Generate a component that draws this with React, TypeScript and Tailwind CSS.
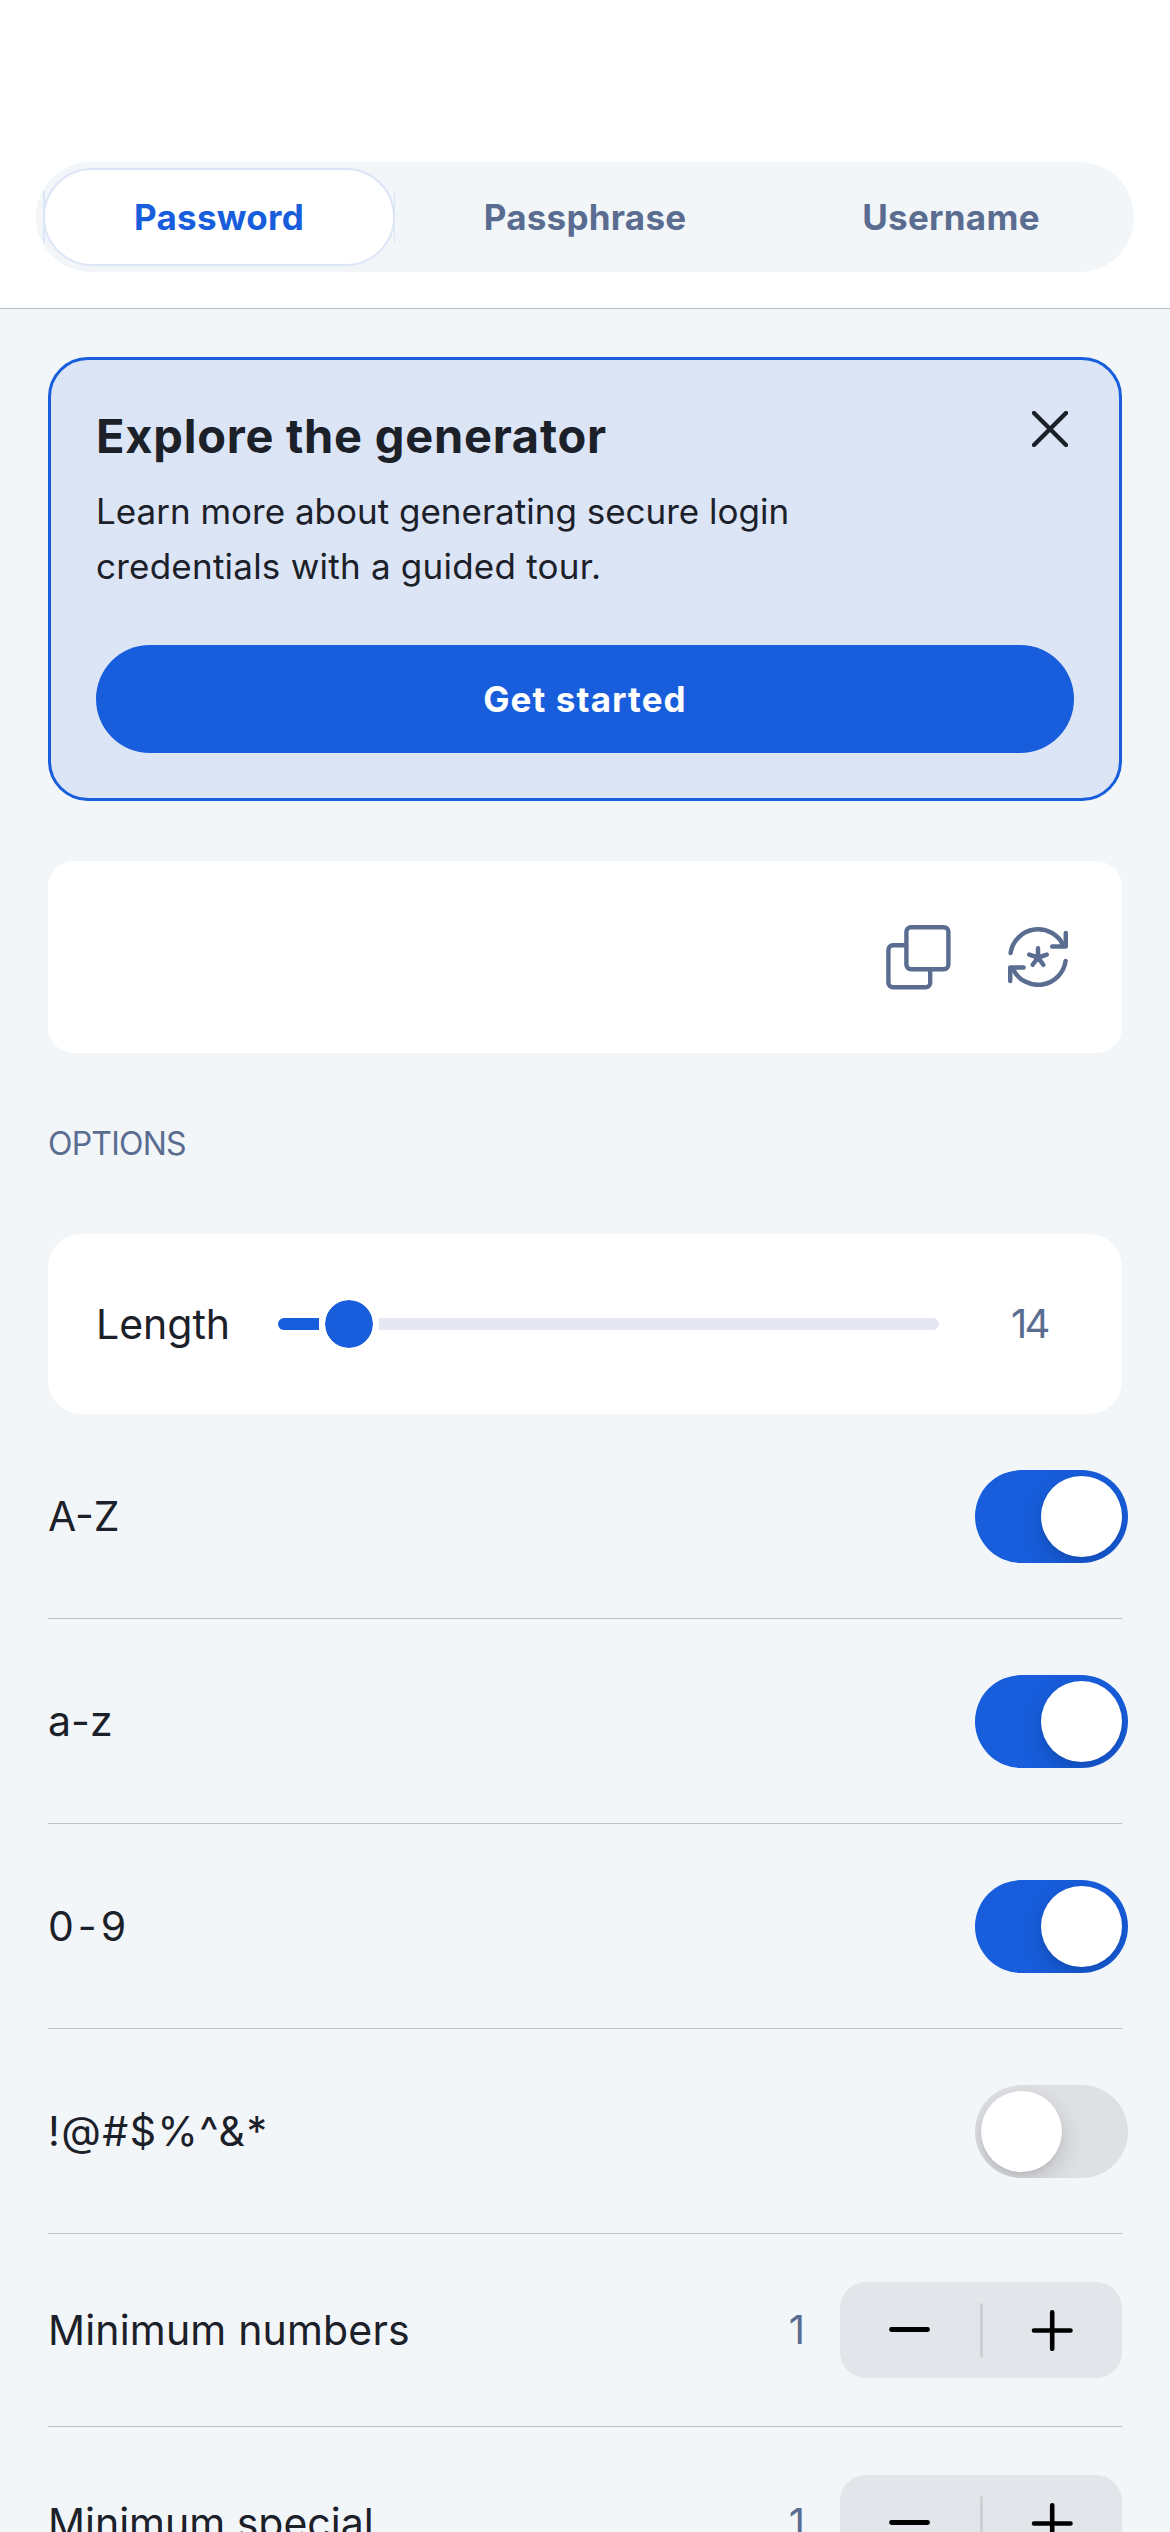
import type { ReactNode } from "react";

function Tab({ children }: { children: ReactNode }) {
  return (
    <div className="flex items-center justify-center text-[35px] font-bold tracking-[0.25px] text-[#5a6d91]">
      {children}
    </div>
  );
}

function CloseIcon() {
  return (
    <svg className="mt-[3px] mr-1.5 h-9 w-9" viewBox="0 0 36 36" fill="none" stroke="#1b2029" strokeWidth="4.4" strokeLinecap="round">
      <path d="M2 2 34 34M34 2 2 34" />
    </svg>
  );
}

function CopyIcon() {
  return (
    <svg className="h-[65px] w-[65px]" viewBox="0 0 65 65" fill="none" stroke="#5a6d91" strokeWidth="4.4" strokeLinejoin="round">
      <rect x="20.4" y="2.3" width="42" height="42" rx="4.5" />
      <path d="M20.4 20.3H7a4.6 4.6 0 0 0-4.6 4.6V57.7a4.6 4.6 0 0 0 4.6 4.6H39.6a4.6 4.6 0 0 0 4.6-4.6V44.3" />
    </svg>
  );
}

function GenerateIcon() {
  return (
    <svg className="h-[60px] w-[60px]" viewBox="0 0 60 60" fill="none" stroke="#5a6d91" strokeWidth="4.5" strokeLinecap="round" strokeLinejoin="round">
      <path d="M2.6 26A27.8 27.8 0 0 1 55.5 18.8" />
      <path d="M57.8 6V19.4H44.2" />
      <path d="M57.6 34A27.8 27.8 0 0 1 5 42" />
      <path d="M15.6 40.4H2.2V54" />
      <path d="M30 30.5V21.2M30 30.5 38.8 27.6M30 30.5 35.3 37.8M30 30.5 24.7 37.8M30 30.5 21.2 27.6" />
    </svg>
  );
}

function Toggle({ on }: { on: boolean }) {
  return (
    <div
      className={
        on
          ? "-mr-1.5 flex h-[93px] w-[153px] items-center justify-end overflow-hidden rounded-full bg-[#175ddc] p-1.5"
          : "-mr-1.5 flex h-[93px] w-[153px] items-center justify-start overflow-hidden rounded-full bg-[#dfe0e4] p-1.5"
      }
    >
      <div className="h-[81px] w-[81px] rounded-full bg-white shadow-[0_9px_24px_rgba(0,0,0,0.16),0_3px_4px_rgba(0,0,0,0.05)]" />
    </div>
  );
}

function ToggleRow({ label, on }: { label: ReactNode; on: boolean }) {
  return (
    <div className="flex h-[205px] items-center justify-between border-b border-[#bbc0c5]">
      <span className="text-[41px] leading-[48px]">{label}</span>
      <Toggle on={on} />
    </div>
  );
}

function Stepper() {
  return (
    <div className="grid h-24 w-[282px] grid-cols-[140px_3px_139px] items-center rounded-[26px] bg-[#e2e5e9]">
      <svg className="ml-[49px] h-[42px] w-[42px]" viewBox="0 0 42 42" stroke="#000" strokeWidth="4.8" strokeLinecap="round">
        <path d="M2.5 20.5H38.5" />
      </svg>
      <div className="h-[54px] w-[3px] rounded-full bg-[#cccfd3]" />
      <svg className="ml-[48px] h-[42px] w-[42px]" viewBox="0 0 42 42" stroke="#000" strokeWidth="4.6" strokeLinecap="round">
        <path d="M3 21.5H39.5M21.2 3.2V39.8" />
      </svg>
    </div>
  );
}

function StepperRow({ label, value }: { label: ReactNode; value: string }) {
  return (
    <div className="flex h-[193px] shrink-0 items-center border-b border-[#bbc0c5]">
      <span className="text-[41px] leading-[48px]">{label}</span>
      <span className="mr-[35px] ml-auto text-[40px] leading-[48px] text-[#5a6d91]">{value}</span>
      <Stepper />
    </div>
  );
}

export default function App() {
  return (
    <div className="h-[2532px] w-[1170px] overflow-hidden bg-[#f2f6f9] font-['Inter',sans-serif] text-[#1b2029]">
      <header className="h-[309px] border-b border-[#b9bcc0] bg-white px-9 pt-[162px]">
        <div className="grid h-[110px] grid-cols-3 rounded-full bg-[#f2f6f9]">
          <div className="flex items-center justify-center">
            <div className="relative flex h-[98px] w-[352px] items-center justify-center rounded-full border-2 border-[#dbe5f6] bg-white text-[35px] font-bold tracking-[0.25px] text-[#175ddc]">
              <span className="absolute top-[21px] -left-[2px] h-[52px] w-[1.5px] bg-[#dbe5f6]" />
              Password
              <span className="absolute top-[21px] -right-[2px] h-[52px] w-[1.5px] bg-[#dbe5f6]" />
            </div>
          </div>
          <Tab>Passphrase</Tab>
          <Tab>Username</Tab>
        </div>
      </header>

      <main className="px-12">
        <section className="mt-12 h-[444px] rounded-[40px] border-[3px] border-[#175ddc] bg-[#dbe5f6] px-[45px] pt-12">
          <div className="flex h-14 items-start justify-between">
            <h1 className="text-[47px] leading-[56px] font-bold tracking-[0.74px]">Explore the generator</h1>
            <CloseIcon />
          </div>
          <p className="mt-5 text-[35px] leading-[55px]">
            <span className="block">Learn more about generating secure login</span>
            <span className="block tracking-[0.23px]">credentials with a guided tour.</span>
          </p>
          <button className="mt-[51px] flex h-[108px] w-full items-center justify-center rounded-full bg-[#175ddc] text-[35px] font-bold tracking-[1.1px] text-white">
            Get started
          </button>
        </section>

        <section className="mt-[60px] flex h-48 items-center justify-end gap-[57px] rounded-[26px] bg-white pr-[54px]">
          <CopyIcon />
          <GenerateIcon />
        </section>

        <h2 className="mt-[71px] text-[32px] leading-10 tracking-[-0.8px] text-[#5a6d91]">OPTIONS</h2>

        <section className="mt-[70px] flex h-[180px] items-center rounded-[33px] bg-white pl-12">
          <span className="w-[182px] text-[41px] leading-[48px]">Length</span>
          <div className="flex w-[661px] items-center">
            <div className="h-3 w-[41px] rounded-l-full bg-[#175ddc]" />
            <div className="z-10 h-[60px] w-[60px] rounded-full border-6 border-white bg-[#175ddc] bg-clip-padding" />
            <div className="-ml-[1px] h-3 flex-1 rounded-r-full bg-[#e5e8f0]" />
          </div>
          <span className="ml-[72px] text-[40px] leading-[48px] tracking-[-2.7px] text-[#5a6d91]">14</span>
        </section>

        <ToggleRow label="A-Z" on />
        <ToggleRow label="a-z" on />
        <ToggleRow label={<span className="tracking-[4px]">0-9</span>} on />
        <ToggleRow label={<span className="tracking-[1.45px]">!@#$%^&amp;*</span>} on={false} />
        <StepperRow label={<span className="tracking-[0.18px]">Minimum numbers</span>} value="1" />
        <StepperRow label="Minimum special" value="1" />
      </main>
    </div>
  );
}
